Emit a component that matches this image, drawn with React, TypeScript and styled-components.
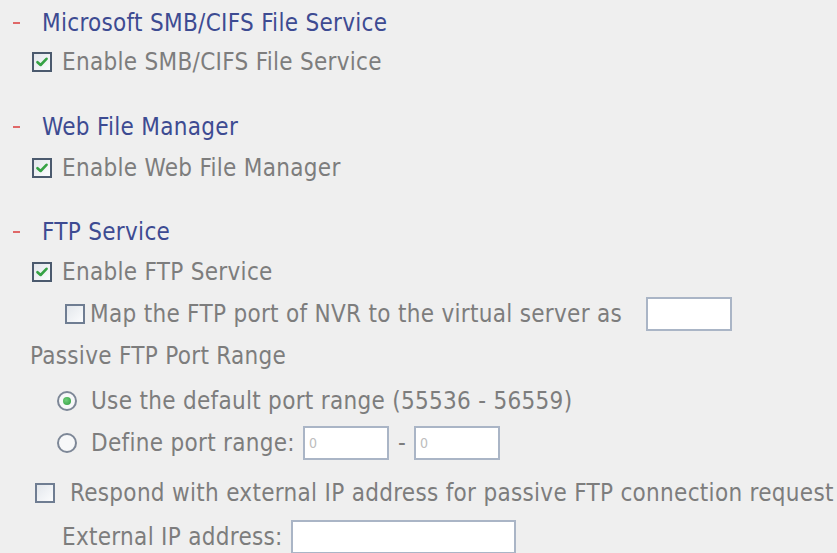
import React, { useState } from 'react';
import styled, { createGlobalStyle } from 'styled-components';

const GlobalStyle = createGlobalStyle`
  html, body {
    margin: 0;
    padding: 0;
    background: #efefef;
  }
  body {
    font-family: "DejaVu Sans Condensed", "DejaVu Sans", sans-serif;
    font-size: 24px;
    letter-spacing: 0.3px;
    color: #7d7d7d;
  }
`;

const Page = styled.div`
  width: 837px;
  height: 553px;
  overflow: hidden;
  padding-top: 6px;
  box-sizing: border-box;
`;

const Section = styled.section<{ $mt?: number }>`
  margin-top: ${p => p.$mt ?? 0}px;
`;

const Row = styled.div<{ $mt?: number; $indent: number }>`
  display: flex;
  align-items: center;
  height: 34px;
  margin-top: ${p => p.$mt ?? 0}px;
  padding-left: ${p => p.$indent}px;
  white-space: nowrap;
`;

const Dash = styled.span`
  display: inline-block;
  width: 7px;
  height: 2px;
  background: #e06868;
  margin-left: 13px;
  margin-right: 22px;
`;

const Title = styled.span`
  color: #3d4b92;
`;

const Label = styled.label<{ $gap?: number }>`
  display: flex;
  align-items: center;
  gap: ${p => p.$gap ?? 10}px;
  cursor: default;
`;

const Box = styled.span<{ $checked?: boolean }>`
  display: inline-flex;
  align-items: center;
  justify-content: center;
  width: 16px;
  height: 16px;
  border: 2px solid ${p => (p.$checked ? '#4b5a6e' : '#6f7d92')};
  background: linear-gradient(135deg, #e3e7ec 0%, #fbfcfd 100%);
  flex-shrink: 0;
`;

const Radio = styled.span<{ $checked?: boolean }>`
  display: inline-flex;
  align-items: center;
  justify-content: center;
  width: 16px;
  height: 16px;
  border-radius: 50%;
  border: 2px solid #7d8797;
  background: #f7f8f9;
  flex-shrink: 0;

  &::after {
    content: '';
    width: 8px;
    height: 8px;
    border-radius: 50%;
    background: ${p => (p.$checked ? 'radial-gradient(circle at 40% 40%, #6fd07a, #2f9a3e)' : 'transparent')};
  }
`;

const TextInput = styled.input<{ $w: number; $h: number; $ml?: number }>`
  width: ${p => p.$w}px;
  height: ${p => p.$h}px;
  margin-left: ${p => p.$ml ?? 0}px;
  box-sizing: border-box;
  border: 2px solid #aab5c6;
  background: #ffffff;
  padding: 0 4px;
  font-family: "DejaVu Sans Condensed", "DejaVu Sans", sans-serif;
  font-size: 14px;
  color: #bdbdbd;
  outline: none;
`;

const Hyphen = styled.span`
  margin: 0 8px 0 9px;
`;

const Check = () => (
  <svg width="12" height="10" viewBox="0 0 12 10">
    <path d="M1.5 5.2 L4.6 8 L10.5 1.8" fill="none" stroke="#36a345" strokeWidth="2.6" strokeLinecap="round" strokeLinejoin="round" />
  </svg>
);

function Checkbox({ checked }: { checked: boolean }) {
  return <Box $checked={checked}>{checked && <Check />}</Box>;
}

export default function App() {
  const [portMode, setPortMode] = useState<'default' | 'custom'>('default');

  return (
    <Page>
      <GlobalStyle />

      <Section>
        <Row $indent={0}>
          <Dash />
          <Title>Microsoft SMB/CIFS File Service</Title>
        </Row>
        <Row $indent={32} $mt={5}>
          <Label>
            <Checkbox checked />
            Enable SMB/CIFS File Service
          </Label>
        </Row>
      </Section>

      <Section $mt={31}>
        <Row $indent={0}>
          <Dash />
          <Title>Web File Manager</Title>
        </Row>
        <Row $indent={32} $mt={7}>
          <Label>
            <Checkbox checked />
            Enable Web File Manager
          </Label>
        </Row>
      </Section>

      <Section $mt={30}>
        <Row $indent={0}>
          <Dash />
          <Title>FTP Service</Title>
        </Row>
        <Row $indent={32} $mt={6}>
          <Label>
            <Checkbox checked />
            Enable FTP Service
          </Label>
        </Row>
        <Row $indent={65} $mt={8}>
          <Label $gap={5}>
            <Checkbox checked={false} />
            Map the FTP port of NVR to the virtual server as
          </Label>
          <TextInput $w={86} $h={34} $ml={24} />
        </Row>
        <Row $indent={30} $mt={8}>
          Passive FTP Port Range
        </Row>
        <Row $indent={57} $mt={11}>
          <Label $gap={14} onClick={() => setPortMode('default')}>
            <Radio $checked={portMode === 'default'} />
            Use the default port range (55536 - 56559)
          </Label>
        </Row>
        <Row $indent={57} $mt={8}>
          <Label $gap={14} onClick={() => setPortMode('custom')}>
            <Radio $checked={portMode === 'custom'} />
            Define port range:
          </Label>
          <TextInput $w={86} $h={34} $ml={8} defaultValue="0" />
          <Hyphen>-</Hyphen>
          <TextInput $w={86} $h={34} defaultValue="0" />
        </Row>
        <Row $indent={35} $mt={16}>
          <Label $gap={15}>
            <Checkbox checked={false} />
            Respond with external IP address for passive FTP connection request
          </Label>
        </Row>
        <Row $indent={62} $mt={10}>
          External IP address:
          <TextInput $w={225} $h={34} $ml={8} />
        </Row>
      </Section>
    </Page>
  );
}
